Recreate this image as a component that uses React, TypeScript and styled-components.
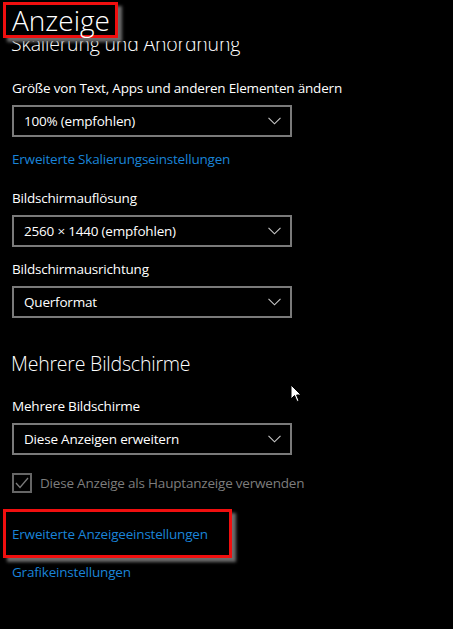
import React from "react";
import styled, { createGlobalStyle } from "styled-components";

const Global = createGlobalStyle`
  html, body { margin: 0; padding: 0; background: #000; }
  body { width: 453px; height: 629px; overflow: hidden; font-family: "Open Sans", "Noto Sans", sans-serif; color: #fff; }
`;

const Page = styled.div`
  position: relative;
  width: 453px;
  height: 629px;
  background: #000;
  overflow: hidden;
`;

const Header = styled.header`
  position: relative;
  z-index: 1;
  height: 41px;
  background: #000;
  padding-top: 2px;
  box-sizing: border-box;
`;

const Highlight = styled.div<{ $w: number }>`
  box-sizing: border-box;
  width: ${(p) => p.$w}px;
  border: 3px solid #f00f0f;
  box-shadow: 4px 4px 3px rgba(120, 120, 120, 0.9);
  background: #000;
`;

const TitleBox = styled(Highlight)`
  margin-left: 3px;
  height: 36px;
  padding: 0 6px;
`;

const Title = styled.h1`
  margin: 0;
  font-size: 28px;
  line-height: 30px;
  font-weight: 300;
  color: #fff;
`;

const Content = styled.main`
  margin-top: -11px;
  padding-left: 12px;
  display: flex;
  flex-direction: column;
  align-items: flex-start;
`;

const SectionHeading = styled.h2<{ $mt: number }>`
  margin: ${(p) => p.$mt}px 0 0 -1px;
  font-size: 19.5px;
  letter-spacing: -0.2px;
  line-height: 28px;
  font-weight: 300;
  color: #fff;
`;

const Label = styled.div<{ $mt: number }>`
  margin-top: ${(p) => p.$mt}px;
  font-size: 13.5px;
  letter-spacing: -0.2px;
  line-height: 20px;
  color: #fff;
`;

const Select = styled.div<{ $mt: number }>`
  margin-top: ${(p) => p.$mt}px;
  box-sizing: border-box;
  width: 280px;
  height: 32px;
  border: 2px solid #7a7a7a;
  padding: 0 9px 0 10px;
  display: flex;
  align-items: center;
  justify-content: space-between;
  font-size: 13.5px;
  letter-spacing: -0.2px;
  color: #fff;
`;

const Link = styled.a<{ $mt: number }>`
  margin-top: ${(p) => p.$mt}px;
  font-size: 13.5px;
  letter-spacing: -0.2px;
  line-height: 20px;
  color: #1a84d8;
  text-decoration: none;
  cursor: pointer;
`;

const LinkBox = styled(Highlight)`
  margin: 16px 0 0 -9px;
  padding: 10px 0 11px 6px;
  background: transparent;
`;

const CheckRow = styled.label`
  margin-top: 18px;
  display: flex;
  align-items: center;
  gap: 8px;
  height: 20px;
  font-size: 13.5px;
  letter-spacing: -0.2px;
  line-height: 20px;
  color: #7d7d7d;
`;

const CheckBox = styled.span`
  box-sizing: border-box;
  width: 20px;
  height: 20px;
  border: 2px solid #666;
  display: flex;
  align-items: center;
  justify-content: center;
`;

const Pointer = styled.svg`
  position: absolute;
  left: 290px;
  top: 384px;
  z-index: 2;
`;

const Chevron = () => (
  <svg width="13" height="8" viewBox="0 0 13 8">
    <path d="M0.5 0.8 L6.5 6.8 L12.5 0.8" fill="none" stroke="#c8c8c8" strokeWidth="1.1" />
  </svg>
);

const Dropdown = ({ mt, value }: { mt: number; value: string }) => (
  <Select $mt={mt}>
    <span>{value}</span>
    <Chevron />
  </Select>
);

export default function App() {
  return (
    <Page>
      <Global />
      <Header>
        <TitleBox $w={115}>
          <Title>Anzeige</Title>
        </TitleBox>
      </Header>
      <Content>
        <SectionHeading $mt={0}>Skalierung und Anordnung</SectionHeading>
        <Label $mt={20}>Größe von Text, Apps und anderen Elementen ändern</Label>
        <Dropdown mt={7} value="100% (empfohlen)" />
        <Link $mt={12}>Erweiterte Skalierungseinstellungen</Link>
        <Label $mt={19}>Bildschirmauflösung</Label>
        <Dropdown mt={7} value="2560 × 1440 (empfohlen)" />
        <Label $mt={12}>Bildschirmausrichtung</Label>
        <Dropdown mt={7} value="Querformat" />
        <SectionHeading $mt={32}>Mehrere Bildschirme</SectionHeading>
        <Label $mt={18}>Mehrere Bildschirme</Label>
        <Dropdown mt={7} value="Diese Anzeigen erweitern" />
        <CheckRow>
          <CheckBox>
            <svg width="14" height="12" viewBox="0 0 14 12">
              <path d="M1 6 L5 10.5 L13 1" fill="none" stroke="#7a7a7a" strokeWidth="1.3" />
            </svg>
          </CheckBox>
          Diese Anzeige als Hauptanzeige verwenden
        </CheckRow>
        <LinkBox $w={229}>
          <Link $mt={0}>Erweiterte Anzeigeeinstellungen</Link>
        </LinkBox>
        <Link $mt={4}>Grafikeinstellungen</Link>
      </Content>
      <Pointer width="12" height="19" viewBox="0 0 12 19">
        <path d="M1 1 L1 15 L4.5 11.5 L7 17.5 L9 16.7 L6.6 11 L11 11 Z" fill="#fff" stroke="#000" strokeWidth="1" />
      </Pointer>
    </Page>
  );
}
